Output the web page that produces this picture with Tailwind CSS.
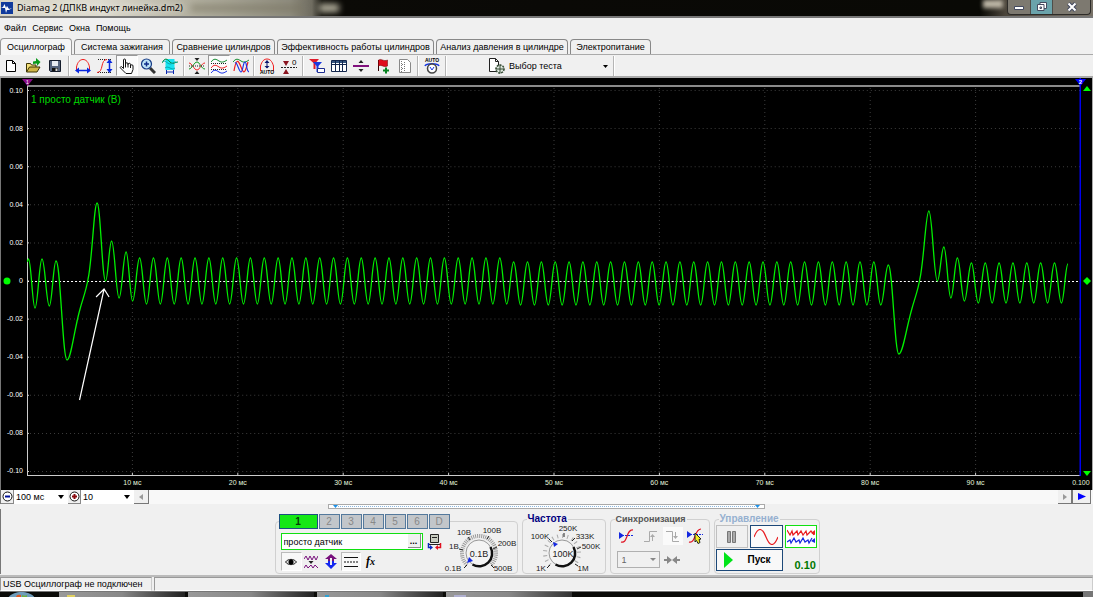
<!DOCTYPE html>
<html lang="ru">
<head>
<meta charset="utf-8">
<title>Diamag 2 (ДПКВ индукт линейка.dm2)</title>
<script src="https://cdn.jsdelivr.net/npm/@tailwindcss/browser@4"></script>
</head>
<body class="flex h-screen flex-col overflow-hidden bg-[#f0f0f0] font-['Liberation_Sans',Arial,sans-serif] text-[9px] leading-3 text-black">

<!-- Title bar -->
<header class="flex h-4 shrink-0 items-center bg-[linear-gradient(90deg,#d8d5c6_0,#dedbcf_100px,#b5b2a2_185px,#aaa797_220px,#8f8c7e_290px,#6f6c60_312px,#15140e_322px,#0b0a06_335px,#0a0906_50%,#090905_980px,#4a443a_1005px,#777167_100%)]">
  <svg class="ml-px size-3 shrink-0" viewBox="0 0 12 12" aria-hidden="true"><path fill="#103a9c" d="M0 0h12v12H0z"/><path fill="#fff" d="M3.500 2 5 6l1-2 2 3 3-1-3 2-2 0-1 3-1-5-4 0 2-1z"/></svg>
  <h1 class="ml-1 font-['Noto_Sans',sans-serif] text-[9px] leading-4 font-normal whitespace-nowrap [text-shadow:0_0_6px_#fff]">Diamag 2 (ДПКВ индукт линейка.dm2)</h1>
  <div class="ml-2 h-2 w-[112px] bg-[#77745f]/50 blur-[3px]"></div>
  <div class="ml-4 h-2 w-5 bg-[#b4b09e] blur-[3px]"></div>
  <div class="mr-1 ml-auto h-2 w-5 self-start bg-[#bdb6a6] blur-[2px]"></div>
  <div class="mr-[2px] flex h-[15px] self-start rounded-b border border-t-0 border-[#2d2b28] bg-[#7d7970]">
    <button aria-label="Свернуть" class="flex w-[23px] items-center justify-center border-r border-[#4f4d49]"><svg class="h-2 w-3" viewBox="0 0 12 8"><path fill="#fff" stroke="#444a60" d="M1.500 3.500h9v3h-9z"/></svg></button>
    <button aria-label="Развернуть" class="flex w-[22px] items-center justify-center border-r border-[#4f4d49] bg-[#6aa3ab]"><svg class="size-3" viewBox="0 0 12 12"><path fill="#fff" stroke="#444a60" d="M4 1.500h6.500v6H4z"/><path fill="#fff" stroke="#444a60" d="M1.500 3.500H8v6H1.500z"/><path stroke="#444a60" fill="none" d="M4 6h1.500v1.500H4z"/></svg></button>
    <button aria-label="Закрыть" class="flex w-[37px] items-center justify-center"><svg class="h-[10px] w-3" viewBox="0 0 12 10"><path stroke="#444a60" stroke-width="4" d="m2.500 1.500 7 7m0-7-7 7"/><path stroke="#fff" stroke-width="2" d="m2.500 1.500 7 7m0-7-7 7"/></svg></button>
  </div>
</header>

<!-- Menu -->
<nav class="flex h-[22px] shrink-0 items-center gap-[6px] border-t-2 border-[#777] pl-1">
  <button>Файл</button><button>Сервис</button><button>Окна</button><button>Помощь</button>
</nav>

<!-- Tabs -->
<div role="tablist" class="flex h-[17px] shrink-0 items-end gap-[2px] border-b border-[#aaa] whitespace-nowrap">
  <button role="tab" aria-selected="true" class="-mb-px h-[17px] w-[72px] rounded-t-sm border border-b-0 border-[#999] bg-[#f6f6f6]">Осциллограф</button>
  <button role="tab" class="h-[15px] w-[96px] rounded-t-sm border border-b-0 border-[#888]">Система зажигания</button>
  <button role="tab" class="h-[15px] w-[103px] rounded-t-sm border border-b-0 border-[#888]">Сравнение цилиндров</button>
  <button role="tab" class="h-[15px] w-[157px] rounded-t-sm border border-b-0 border-[#888]">Эффективность работы цилиндров</button>
  <button role="tab" class="h-[15px] w-[132px] rounded-t-sm border border-b-0 border-[#888]">Анализ давления в цилиндре</button>
  <button role="tab" class="h-[15px] w-[81px] rounded-t-sm border border-b-0 border-[#888]">Электропитание</button>
</div>

<!-- Toolbar -->
<div role="toolbar" class="flex h-[23px] shrink-0 items-center border-b-2 border-[#aaa] [&_svg]:size-4 [&>button]:flex [&>button]:h-[21px] [&>button]:shrink-0 [&>button]:items-center [&>button]:justify-center">
  <button class="w-[22px]" aria-label="Новый"><svg viewBox="0 0 16 16"><path fill="#fff" stroke="#000" d="M3.500 2.500h6l3 3v8h-9z"/><path fill="none" stroke="#000" d="M9.500 2.500v3h3"/></svg></button>
  <button class="w-[22px]" aria-label="Открыть"><svg viewBox="0 0 16 16"><path fill="#f3df7a" stroke="#3c3405" d="M1.500 14V5.500h4l1 1.500h4.500v2"/><path fill="#d0b548" stroke="#3c3405" d="m1.500 14 3-5H15l-3 5z"/><path fill="#0a9a1c" d="m11 0 4.500 4L12 8V5.500L8 6V3.500l3-.5z"/></svg></button>
  <button class="w-[22px]" aria-label="Сохранить"><svg viewBox="0 0 16 16"><path fill="#56647e" stroke="#151c2c" d="M2.500 2.500h11v11h-10l-1-1z"/><path fill="#e7ebf2" d="M5 3h6v5H5z"/><path fill="#111" d="M5 10h6v3H5z"/><path fill="#ddd" d="M8.500 10.500h2V13h-2z"/></svg></button>
  <span class="mx-[2px] h-5 w-[2px] border-l border-[#b5b5b5] bg-white"></span>
  <button class="w-[22px]" aria-label="Период"><svg viewBox="0 0 16 16" fill="none"><path stroke="#f02020" d="M1.500 12V9C2.500 4 5 1.500 8 1.500S13.500 4 14.500 9v3"/><path stroke="#0a28e0" stroke-width="1.500" d="M2 12.500h12"/><path fill="#0a28e0" d="m0 12.500 4-3v6zm16 0-4-3v6z"/></svg></button>
  <button class="w-[22px]" aria-label="Амплитуда"><svg viewBox="0 0 16 16" fill="none"><path stroke="#222" stroke-dasharray="1 1" d="M1 1.500h14M1 14.500h14"/><path stroke="#f02020" d="M0 14.500c7 0 3-13 10-13"/><path stroke="#0a28e0" stroke-width="1.500" d="M12.500 3v10"/><path fill="#0a28e0" d="m12.500 1 3 4h-6zm0 14 3-4h-6z"/></svg></button>
  <button class="w-[22px] border border-[#999] border-r-white border-b-white bg-[#fbfbfb]" aria-label="Рука" aria-pressed="true"><svg viewBox="0 0 16 16"><path fill="#fff" stroke="#111" d="M4.500 10.500V2a1 1 0 0 1 2 0v5-1a1 1 0 0 1 2.500 0v1-.5a1 1 0 0 1 2.500 0V8a1 1 0 0 1 2.500 0v3.500l-1.500 4H7L1.500 10c-.8-1 .8-2 1.500-1z"/><path stroke="#111" d="M6.500 7v2.500M9 7v2.500M11.500 8v2"/></svg></button>
  <button class="w-[19px]" aria-label="Увеличить"><svg viewBox="0 0 16 16"><path stroke="#333" stroke-width="3" d="m10 10 5 5"/><circle cx="6.500" cy="6" r="5" fill="#bfe4f7" stroke="#183c86" stroke-width="1.200"/><path stroke="#102d8a" stroke-width="1.500" d="M4 6h5M6.500 3.500v5"/></svg></button>
  <button class="w-[25px]" aria-label="Участок"><svg viewBox="0 0 16 16" fill="none"><path fill="#18e4f0" d="M3.500 1h9v11h-9z"/><path stroke="#078a3a" d="M0 5c3-6 5-4 8-1s5 0 8 0"/><path stroke="#08a5b0" d="M1 4c2-3 4 2 7 2s5-4 7-1M3 10c4-3 6 3 10 0"/><path stroke="#0a28b0" d="M4.500 12v4m7-4v4M5 14h6"/></svg></button>
  <span class="mx-px h-5 w-[2px] border-l border-[#b5b5b5] bg-white"></span>
  <button class="w-[22px]" aria-label="Сжать сигналы"><svg viewBox="0 0 16 16" fill="none"><path stroke="#f02020" d="M0 5c3 0 5 7 8 7s4-7 8-7"/><path stroke="#0a9a1c" d="M0 11c3 0 5-7 8-7s4 7 8 7"/><path stroke="#222" stroke-dasharray="1 1" d="M0 8h16"/><path fill="#222" d="M5.500 0h5L8 3zM5.500 16h5L8 13z"/></svg></button>
  <button class="w-[22px] border border-[#999] border-r-white border-b-white bg-[#fbfbfb]" aria-label="Разделить сигналы" aria-pressed="true"><svg viewBox="0 0 16 16" fill="none"><path stroke="#128c30" d="M0 4c3-4 5-3 8-1s5 1 8-1"/><path stroke="#f02020" d="M0 10c3-4 5-3 8-1s5 1 8-1"/><path stroke="#1830e8" d="M0 15c3-4 5-3 8-1s5 1 8-1"/><path stroke="#222" stroke-dasharray="1 1" d="M0 5.500h16M0 11.500h16"/></svg></button>
  <button class="w-[22px]" aria-label="Наложить сигналы"><svg viewBox="0 0 16 16" fill="none"><path stroke="#128c30" d="M0 4c3-4 5-3 8-1s5 1 8-1"/><path stroke="#f02020" stroke-width="1.200" d="M1 13c2-12 4-12 7-4s4 6 7-5"/><path stroke="#1830e8" stroke-width="1.200" d="M2 5c2-2 4 9 6 9s2-10 4-10 1 9 4 10"/></svg></button>
  <span class="mx-px h-5 w-[2px] border-l border-[#b5b5b5] bg-white"></span>
  <button class="w-[22px]" aria-label="Авто масштаб"><svg viewBox="0 0 16 16" fill="none"><path stroke="#f02020" d="M1.500 13V8C3 3 5 1 8 1s5 2 6.500 7v5"/><path stroke="#0a1870" d="M8 3v7"/><path fill="#0a1870" d="m8 2 2.500 3h-5zm0 8.500L10.500 8h-5z"/><text x="8" y="16" text-anchor="middle" font-size="5" font-weight="bold" fill="#000">AUTO</text></svg></button>
  <button class="w-[22px]" aria-label="Установить ноль"><svg viewBox="0 0 16 16"><path stroke="#222" stroke-dasharray="2 1" d="M0 9.500h16"/><path fill="#8a1420" d="M2 3h6L5 8zm0 13h6l-3-5z"/><text x="11" y="7" font-size="8" fill="#000">0</text></svg></button>
  <span class="mx-[2px] h-5 w-[2px] border-l border-[#b5b5b5] bg-white"></span>
  <button class="w-[22px]" aria-label="Фильтр"><svg viewBox="0 0 16 16"><path fill="#e01b2c" d="M0 1h10L6.500 5v6h-2V5z"/><path fill="#1838e0" d="M4 4h9l-3.500 4v6h-2V8z"/><path fill="#fff" stroke="#1c2c90" d="M8.500 10.500h7v4h-7z"/></svg></button>
  <button class="w-[22px]" aria-label="Таблица"><svg viewBox="0 0 16 16"><path fill="#fff" stroke="#14274d" d="M.5 2.500h15v11H.5z"/><path fill="#35557f" d="M1 3h14v2H1z"/><path stroke="#14274d" d="M1 6.500h14M4.500 3v10M8.500 3v10m3-10v10"/></svg></button>
  <button class="w-[22px]" aria-label="Разделитель"><svg viewBox="0 0 16 16"><path stroke="#80107c" stroke-width="2" d="M0 8h16"/><path fill="#222" d="M5.500 5h5L8 2zm0 6h5L8 14z"/></svg></button>
  <button class="w-[22px]" aria-label="Добавить метку"><svg viewBox="0 0 16 16"><path stroke="#300" d="M3.500 2v11"/><path fill="#e00c1c" stroke="#600" stroke-width=".5" d="M3.500 2c3-2 5 2 9 0v6c-4 2-6-2-9 0z"/><path stroke="#078320" stroke-width="2" d="M8 12.500h6m-3-3v6"/></svg></button>
  <button class="w-[22px]" aria-label="Отчёт"><svg viewBox="0 0 16 16"><path fill="#fff" stroke="#888" d="M2.500 1.500h8l3 3v10h-11z"/><path stroke="#777" stroke-dasharray="1 1" d="M4.500 3v11M7.500 4v9M5 6.500h3M5 10.500h3"/></svg></button>
  <span class="mr-[2px] ml-px h-5 w-[2px] border-l border-[#b5b5b5] bg-white"></span>
  <button class="w-[22px]" aria-label="Авто измерение"><svg viewBox="0 0 16 16" fill="none"><text x="8" y="4" text-anchor="middle" font-size="5" font-weight="bold" fill="#000">AUTO</text><path stroke="#1838e0" stroke-width="1.500" d="M1 8c1-3 13-3 14 0"/><circle cx="8" cy="10.500" r="4.500" fill="#fff" stroke="#444" stroke-width="1.500"/><path stroke="#1838e0" d="m6 9 2 3 2-3"/></svg></button>
  <span class="ml-[2px] h-5 w-[2px] border-l border-[#b5b5b5] bg-white"></span>
  <button class="ml-[42px] w-[122px] gap-1"><svg class="shrink-0" viewBox="0 0 16 16"><path fill="#fff" stroke="#222" d="M.5.5h6l3 3v10h-9z"/><path fill="none" stroke="#222" d="M6.500.5v3h3"/><circle cx="11" cy="11" r="4" fill="#dfe8df" stroke="#344a34" stroke-width="1.500" stroke-dasharray="2 1"/><path stroke="#344a34" d="M11 6.500v9M6.500 11h9"/></svg><span>Выбор теста</span><svg class="ml-auto shrink-0" viewBox="0 0 16 16"><path fill="#000" d="M8 7h5l-2.500 3z"/></svg></button>
  <span class="ml-[2px] h-5 w-[2px] border-l border-[#b5b5b5] bg-white"></span>
</div>

<!-- Oscillogram -->
<main class="flex min-h-0 flex-1 flex-col overflow-hidden border-x border-l-[#777] border-r-[#aaa] bg-black text-[7px] leading-2 text-white">
  <div class="flex min-h-0 flex-1">
    <div class="relative flex w-[26px] flex-col justify-between pt-[9px] pr-1 pb-px text-right">
      <span>0.10</span><span>0.08</span><span>0.06</span><span>0.04</span><span>0.02</span><span>0</span><span>-0.02</span><span>-0.04</span><span>-0.06</span><span>-0.08</span><span>-0.10</span>
      <svg class="absolute top-[199px] left-[2px] h-2 w-2" viewBox="0 0 8 8"><circle cx="4" cy="4" r="3.500" fill="#0f0"/></svg>
    </div>
    <div class="relative min-w-0 flex-1">
      <svg id="plot" class="absolute inset-0 size-full" viewBox="27 78 1053 398" preserveAspectRatio="none" fill="none">
        <path stroke="#8a8a8a" stroke-width="2" d="M27 86h1053"/>
        <g id="grid" stroke="#3c3c3c" stroke-dasharray="1 3"></g>
        <path stroke="#fff" stroke-dasharray="2 2" d="M27 281.500h1053"/>
        <path stroke="#ccc" stroke-width="2" d="M27 82v393"/>
        <path stroke="#ccc" d="M27 475.500h1053"/>
        <path id="wave" stroke="#00f000" stroke-width="1.300"/>
        <path stroke="#fff" stroke-width="1.200" d="m79.500 400 24.500-111m-8 8 8-8 5 8"/>
        <path stroke="#0000f0" stroke-width="2" d="M1079.500 78v398"/>
      </svg>
      <p class="relative mt-4 ml-1 w-fit text-[10px] leading-3 text-[#00dc00]">1 просто датчик (В)</p>
      <svg class="absolute top-px -left-[5px] h-[9px] w-[11px]" viewBox="0 0 11 9"><path fill="#8a0c86" d="M0 0h11L5.500 7z"/><text x="5.500" y="5" text-anchor="middle" font-size="5" fill="#fff">1</text></svg>
      <svg class="absolute top-px -right-[5px] h-[9px] w-[11px]" viewBox="0 0 11 9"><path fill="#00f" d="M0 0h11L5.500 7z"/><text x="5.500" y="5" text-anchor="middle" font-size="6" font-weight="bold" fill="#fff">2</text></svg>
    </div>
    <div class="flex w-[11px] flex-col items-end justify-between pt-2 pr-px">
      <svg class="h-[5px] w-2" viewBox="0 0 8 5"><path fill="#0f0" d="M4 0 8 5H0z"/></svg>
      <svg class="h-2 w-2" viewBox="0 0 8 8"><path fill="#0f0" d="m4 0 4 4-4 4-4-4z"/></svg>
      <svg class="h-[5px] w-2" viewBox="0 0 8 5"><path fill="#0f0" d="M0 0h8L4 5z"/></svg>
    </div>
  </div>
  <div class="flex h-[14px] shrink-0 pr-[11px] pl-[26px] text-center leading-[14px] whitespace-nowrap text-[#e4f4dc]">
    <span class="w-[5%] shrink-0"></span>
    <span class="w-[10%] shrink-0">10 мс</span><span class="w-[10%] shrink-0">20 мс</span><span class="w-[10%] shrink-0">30 мс</span><span class="w-[10%] shrink-0">40 мс</span><span class="w-[10%] shrink-0">50 мс</span><span class="w-[10%] shrink-0">60 мс</span><span class="w-[10%] shrink-0">70 мс</span><span class="w-[10%] shrink-0">80 мс</span><span class="w-[10%] shrink-0">90 мс</span><span class="w-[10%] shrink-0">0.100</span>
  </div>
</main>

<!-- Scale and scroll row -->
<div class="flex h-[14px] shrink-0 items-stretch border-l border-[#777] bg-[#f8f8f8]">
  <button aria-label="Уменьшить" class="flex w-[13px] items-center justify-center border-r border-b border-[#888] bg-[#f0f0f0]"><svg class="size-[11px]" viewBox="0 0 11 11"><circle cx="5.500" cy="5.500" r="4.500" fill="#fff" stroke="#111"/><path stroke="#00109a" stroke-width="2" d="M3 5.500h5"/></svg></button>
  <div class="relative flex"><select aria-label="Развёртка" class="w-[54px] appearance-none bg-white pl-[2px]"><option>100 мс</option></select><svg class="pointer-events-none absolute top-[5px] right-1 h-1 w-[6px]" viewBox="0 0 6 4"><path d="M0 0h6L3 4z"/></svg></div>
  <button aria-label="Увеличить" class="flex w-[13px] items-center justify-center border-r border-b border-[#888] bg-[#f0f0f0]"><svg class="size-[11px]" viewBox="0 0 11 11"><circle cx="5.500" cy="5.500" r="4.500" fill="#fff" stroke="#111"/><path stroke="#8a0c10" stroke-width="2" d="M3 5.500h5M5.500 3v5"/></svg></button>
  <div class="relative flex"><select aria-label="Масштаб" class="w-[53px] appearance-none bg-white pl-[2px]"><option>10</option></select><svg class="pointer-events-none absolute top-[5px] right-1 h-1 w-[6px]" viewBox="0 0 6 4"><path d="M0 0h6L3 4z"/></svg></div>
  <button aria-label="Назад" class="flex w-[15px] items-center justify-center border-r border-b border-[#777] bg-[#f0f0f0]"><svg class="size-[6px]" viewBox="0 0 6 6"><path fill="#999" d="M5 0v6L1 3z"/></svg></button>
  <div class="flex-1"></div>
  <button aria-label="Вперёд" class="flex w-[14px] items-center justify-center border-r border-b border-[#777] bg-[#f0f0f0]"><svg class="size-[6px]" viewBox="0 0 6 6"><path fill="#999" d="M1 0v6l4-3z"/></svg></button>
  <button aria-label="В конец" class="mr-[2px] flex w-[19px] items-center justify-center border-r border-b border-l border-[#777] bg-[#f0f0f0]"><svg class="h-[7px] w-2" viewBox="0 0 8 7"><path fill="#00f" d="M0 0v7l8-3.500z"/></svg></button>
</div>

<!-- Splitter -->
<div class="mx-auto flex h-[5px] w-[437px] shrink-0 items-center justify-between border border-[#aaa] bg-white px-1">
  <svg class="h-[3px] w-[5px]" viewBox="0 0 5 3"><path fill="#1c90e8" d="M0 0h5L2.500 3z"/></svg>
  <span class="h-px flex-1 border-t border-dotted border-[#8cb8e0]"></span>
  <svg class="h-[3px] w-[5px]" viewBox="0 0 5 3"><path fill="#1c90e8" d="M0 0h5L2.500 3z"/></svg>
</div>

<!-- Control panel -->
<section class="flex h-[65px] shrink-0 items-end justify-center gap-1 border-l border-[#777]">
  <fieldset class="h-[60px] w-[243px] rounded-sm border border-[#d0d0d0]">
    <legend class="ml-[3px] flex h-[15px] gap-px text-[10px] font-bold text-[#888]">
      <button class="w-[39px] border border-[#1c5080] bg-[#16e816] text-[#063a06]">1</button>
      <button class="w-[21px] border border-[#54799c] bg-[#c2c6ca] font-normal">2</button>
      <button class="w-[21px] border border-[#54799c] bg-[#c2c6ca] font-normal">3</button>
      <button class="w-[21px] border border-[#54799c] bg-[#c2c6ca] font-normal">4</button>
      <button class="w-[21px] border border-[#54799c] bg-[#c2c6ca] font-normal">5</button>
      <button class="w-[21px] border border-[#54799c] bg-[#c2c6ca] font-normal">6</button>
      <button class="w-[21px] border border-[#54799c] bg-[#c2c6ca] font-normal">D</button>
    </legend>
    <div class="flex">
      <div class="w-[171px] pt-1 pl-[5px]">
        <div class="flex h-[17px] items-center">
          <div class="flex h-[17px] w-[142px] border border-[#10e010] bg-white">
            <input aria-label="Имя канала" value="просто датчик" class="min-w-0 flex-1 pl-[2px] outline-none">
            <button aria-label="Выбрать датчик" class="mr-px mb-px w-[13px] border-r border-b border-[#888] bg-[#f0f0f0] leading-[6px] font-bold">...</button>
          </div>
          <button aria-label="Поменять каналы" class="ml-1"><svg class="h-4 w-[15px]" viewBox="0 0 15 16" fill="none"><path fill="#c8ccc0" stroke="#222" d="M3.500.5h8v8h-8z"/><path stroke="#222" d="M2 10.500h11M5 3.500h5"/><path stroke="#0a28c0" stroke-width="1.500" d="M4 13.500H1.500V9"/><path stroke="#e01020" stroke-width="1.500" d="M10 13.500h3.500V9"/><path fill="#0a28c0" d="m3 11 3 2.500L3 16z"/><path fill="#e01020" d="m11 11-3 2.500 3 2.500z"/></svg></button>
        </div>
        <div class="mt-[2px] flex h-[19px] items-center">
          <button aria-label="Показать" aria-pressed="true" class="flex h-[19px] w-[21px] items-center justify-center border border-[#bbb] border-r-white border-b-white bg-[#f8f8f8]"><svg class="h-2 w-3" viewBox="0 0 12 8"><path fill="#ddd" stroke="#222" d="M.5 4C3 .5 9 .5 11.500 4 9 7.500 3 7.500.5 4z"/><circle cx="6" cy="4" r="2.500"/></svg></button>
          <button aria-label="Сглаживание" class="flex w-[19px] justify-center"><svg class="size-[14px]" viewBox="0 0 14 14" fill="none" stroke="#78107c"><path d="m0 4 2-3 2 4 2-4 2 4 2-4 2 4 2-4M0 13l2-3 2 3 3-3 2 3 2-3 3 3"/><path fill="#222" stroke="none" d="M4.500 6h5L7 9z"/></svg></button>
          <button aria-label="Смещение" class="flex w-[20px] justify-center"><svg class="h-[15px] w-3" viewBox="0 0 12 15"><path fill="#78107c" d="m6 0 6 5H9v3H3V5H0z"/><path fill="#1428f0" d="m6 15 6-6H9V7H3v2H0z"/><path fill="#f0f0f0" d="M5 4h2v7H5z"/></svg></button>
          <button aria-label="Уровни" aria-pressed="true" class="flex h-[19px] w-5 items-center justify-center border border-[#bbb] border-r-white border-b-white bg-[#f8f8f8]"><svg class="h-3 w-[14px]" viewBox="0 0 14 12" stroke="#111"><path d="M0 1.500h14M0 10.500h14"/><path stroke-dasharray="2 1" d="M0 6h14"/></svg></button>
          <button aria-label="Функция" class="w-5 font-['Liberation_Serif',serif] text-[12px] font-bold italic">f<span class="text-[10px]">x</span></button>
        </div>
      </div>
      <svg class="h-[44px] w-[69px] overflow-visible" viewBox="446 528 69 44" font-size="8" text-anchor="middle" fill="#222">
        <path fill="none" stroke="#999" stroke-width="4" stroke-dasharray="1 1" d="M466 564a17 17 0 1 1 24 0"/>
        <path stroke="#222" d="m463 567 3-3M458 548l4 1M467 536l2 3M488 535l-2 3M496 546l-4 2M493 567l-3-3"/>
        <circle cx="478" cy="552" r="13" fill="#f4f4f4" stroke="#999"/>
        <path fill="none" stroke="#111" stroke-width="2.500" d="M489.500 546a13 13 0 0 1-18 17.500"/>
        <path fill="#1428e0" d="m466 562 2-6 4 4z"/>
        <text x="478" y="556" font-size="9">0.1В</text>
        <text x="452" y="570">0.1В</text><text x="453" y="548">1В</text><text x="463" y="534">10В</text><text x="491" y="532">100В</text><text x="506" y="545">200В</text><text x="502" y="570">500В</text>
      </svg>
    </div>
  </fieldset>

  <fieldset class="h-[61px] w-[84px] rounded-sm border border-[#d0d0d0]">
    <legend class="ml-1 px-px text-[10px] leading-3 font-bold text-[#000080]">Частота</legend>
    <svg class="h-[48px] w-[82px] overflow-visible" viewBox="521 524 82 48" font-size="8" text-anchor="middle" fill="#222">
      <path fill="none" stroke="#aaa" stroke-width="4" stroke-dasharray="1 4" d="M548 564a17 17 0 1 1 24 0"/>
      <path stroke="#222" d="m545 567 3-3M547 538l3 3M562 532v4M573 537l-3 3M579 546l-4 2M576 565l-3-2"/>
      <circle cx="560" cy="552" r="13" fill="#f4f4f4" stroke="#999"/>
      <path fill="none" stroke="#111" stroke-width="2.500" d="M571.500 546a13 13 0 0 1-18 17.500"/>
      <path fill="#1428e0" d="m551 541 5 2-4 3z"/>
      <text x="561" y="556" font-size="9">100K</text>
      <text x="538" y="538">100K</text><text x="566" y="530">250K</text><text x="583" y="538">333K</text><text x="589" y="548">500K</text><text x="581" y="570">1M</text><text x="539" y="570">1K</text>
    </svg>
  </fieldset>

  <fieldset class="h-[61px] w-[100px] rounded-sm border border-[#d0d0d0]">
    <legend class="ml-1 px-px leading-3 font-bold text-[#555]">Синхронизация</legend>
    <div class="flex h-[22px] items-center pl-1">
      <button aria-label="Уровень" class="flex w-6 justify-center"><svg class="h-4 w-[15px]" viewBox="0 0 15 16" fill="none"><path stroke="#1428e0" stroke-dasharray="2 1" d="M0 7.500h15"/><path fill="#1428e0" d="m0 4 5 3.500L0 11z"/><path stroke="#e01020" stroke-width="1.200" d="M2 14c7 2 5-13 12-12"/></svg></button>
      <button aria-label="По фронту" class="flex w-6 justify-center"><svg class="h-[13px] w-[15px]" viewBox="0 0 15 13" fill="none"><path stroke="#aaa" d="M1 11.500h5.500v-10H14M9.500 5v6"/><path fill="#aaa" d="m9.500 4 2.500 3H7z"/></svg></button>
      <button aria-label="По спаду" class="flex h-[18px] w-5 items-center justify-center bg-[#fafafa]"><svg class="h-[13px] w-[15px]" viewBox="0 0 15 13" fill="none"><path stroke="#aaa" d="M1 1.500h6.500v10H14M10.500 2v6"/><path fill="#aaa" d="m10.500 9 2.500-3H8z"/></svg></button>
      <button aria-label="Указать уровень" class="flex w-6 justify-center"><svg class="size-4" viewBox="0 0 16 16" fill="none"><path stroke="#1428e0" stroke-dasharray="2 1" d="M0 6.500h16"/><path fill="#1428e0" d="m0 3 5 3.500L0 10z"/><path stroke="#e01020" stroke-width="1.200" d="M2 14c7 2 5-13 12-13"/><path fill="#f4ee20" stroke="#222" d="m8 5 6 6-2 .5 1 3-2 1-1.500-3L8 14z"/></svg></button>
    </div>
    <div class="mt-1 flex items-center pl-[6px]">
      <div class="relative flex"><select aria-label="Канал синхронизации" disabled class="h-[17px] w-[43px] appearance-none border border-[#b0b0b0] pl-1 text-[#666] opacity-100"><option>1</option></select><svg class="pointer-events-none absolute top-[7px] right-1 h-[3px] w-[6px]" viewBox="0 0 6 3"><path fill="#888" d="M0 0h6L3 3z"/></svg></div>
      <button aria-label="К центру" class="ml-1"><svg class="h-2 w-4" viewBox="0 0 16 8"><path stroke="#888" stroke-width="2" d="M0 4h5m6 0h5"/><path fill="#888" d="m3 0 5 4-5 4zm10 0L8 4l5 4z"/></svg></button>
    </div>
  </fieldset>

  <fieldset class="h-[61px] w-[106px] rounded-sm border border-[#d0d0d0]">
    <legend class="ml-1 px-px text-[10px] leading-3 font-bold text-[#96b0d0]">Управление</legend>
    <div class="flex h-[23px] items-stretch gap-[2px] px-px">
      <button aria-label="Пауза" class="flex w-[32px] items-center justify-center border border-[#c0c0c0]"><svg class="h-3 w-[9px]" viewBox="0 0 9 12" fill="#aaa" stroke="#777"><path d="M.5.5h3v11h-3zM5.500.5h3v11h-3z"/></svg></button>
      <button aria-label="Однократно" class="flex w-[33px] items-center justify-center border border-[#1c4878] bg-[#fafafa]"><svg class="h-4 w-6" viewBox="0 0 24 16" fill="none"><path stroke="#e81c20" stroke-width="1.200" d="M0 8C4-2 8-2 12 8s8 10 12 0"/></svg></button>
      <button aria-label="Непрерывно" class="flex w-[32px] items-center justify-center border border-[#10e010] bg-white"><svg class="h-4 w-7" viewBox="0 0 28 16" fill="none"><path stroke="#e81c20" stroke-width="1.200" d="m0 1 3 5 2-4 1 4 4-4 1 4 3-4 2 4 3-4 1 4 4-4 3 4"/><path stroke="#1428e0" stroke-width="1.200" d="m0 13 3-2 1 3 3-5 2 4 3-2 1 3 3-5 2 4 3-2 1 3 3-5"/><path fill="#e81c20" d="M28 1v5l-4-2z"/><path fill="#1428e0" d="M28 9v5l-4-2z"/></svg></button>
    </div>
    <div class="mt-px flex h-[22px] items-center pl-px">
      <button class="flex h-[22px] w-[67px] items-center border border-[#1c4878] bg-[#f8f8f8] pl-[7px] text-[10px] font-bold"><svg class="mr-[15px] h-4 w-[9px]" viewBox="0 0 9 16"><path fill="#00e418" d="m0 0 9 8-9 8z"/></svg>Пуск</button>
      <output class="mt-[10px] ml-3 text-[11px] font-bold text-[#007800]">0.10</output>
    </div>
  </fieldset>
</section>

<!-- Status bar -->
<footer class="mt-px flex h-4 shrink-0 gap-[2px] border-t-2 border-[#bbb]">
  <div class="w-[152px] border border-[#999] border-r-[#ccc] border-b-white pl-[2px] leading-3 whitespace-nowrap">USB Осциллограф не подключен</div>
  <div class="flex-1 border border-[#999] border-r-[#ccc] border-b-white"></div>
</footer>

<!-- Taskbar -->
<div class="flex h-[6px] shrink-0 gap-[3px] border-t border-[#777] bg-[#0b0b08]">
  <svg class="ml-2 h-[6px] w-[27px]" viewBox="0 0 27 6"><path fill="#6f9cba" d="M0 6C5-2 22-2 27 6z"/><path fill="#e05820" d="M8 6c0-3 2-4 5-3v3z"/><path fill="#70b040" d="M14 6V3c2 1 4 1 5 0v3z"/></svg>
  <div class="ml-[21px] flex w-[126px] bg-linear-to-r from-[#999] via-[#888] to-[#222] pt-[3px] pl-2"><span class="w-2 bg-[#e0d060]"></span></div>
  <div class="w-[126px] bg-linear-to-r from-[#999] via-[#888] to-[#222]"></div>
  <div class="flex w-[126px] bg-linear-to-r from-[#999] via-[#888] to-[#222] pt-[3px] pl-2"><span class="w-1 bg-[#30a0d0]"></span></div>
  <div class="flex w-[126px] bg-linear-to-r from-[#999] via-[#888] to-[#333] pt-[3px] pl-2"><span class="w-3 bg-[#b0b0d0]"></span></div>
  <div class="ml-auto w-[10px] bg-[#777]"></div>
</div>

<script>
  // Grid: eleven voltage levels and nine time marks
  let g = '';
  for (let i = 0; i <= 10; i++) {
    const y = 90.5 + i * 38.1;
    if (i !== 5) g += `<path d="M30 ${y}H1080"/>`;
    g += `<path stroke="#ccc" stroke-dasharray="none" d="M26 ${y}h3"/>`;
  }
  for (let i = 1; i < 10; i++) {
    const x = 27 + i * 105.3;
    g += `<path d="M${x} 88V475"/><path stroke="#ccc" stroke-dasharray="none" d="M${x} 473v3"/>`;
  }
  document.getElementById('grid').innerHTML = g;

  // Crankshaft sensor signal: smooth arcs between successive extrema
  const teeth = (from, to, top, bottom) => {
    const out = [];
    for (let x = from; x < to; x += 13.84) out.push([x, top], [x + 6.9, bottom]);
    return out;
  };
  const arcs = pts => pts.map(([x, y], i) => {
    if (!i) return '';
    const [px, py] = pts[i - 1], h = (x - px) * 0.4;
    return `C${px + h} ${py} ${x - h} ${y} ${x} ${y}`;
  }).join('');
  const first = [[28.5, 259], [35, 308], [42, 259], [49.3, 306], [56, 261], [67, 360]];
  const middle = [[97, 203], [105.5, 281], [111.5, 241], [119, 298], [126, 252], [132.5, 301],
    ...teeth(139.5, 500, 258, 304), ...teeth(513.2, 880, 262, 305), [887.5, 265], [898, 354]];
  const last = [[928, 211], [936.5, 281], [943, 247], [950, 298], [956.5, 258], [963.5, 301],
    ...teeth(970.5, 1060, 263, 303), [1067, 264]];
  document.getElementById('wave').setAttribute('d',
    'M27 262L28.500 259' + arcs(first) + 'C71 360 74 330 80 309C83 298 86 291 88 279C92 262 94 203 97 203' +
    arcs(middle) + 'C902 354 905 330 911 309C914 298 917 291 919 279C923 262 925 211 928 211' + arcs(last));
</script>
</body>
</html>
